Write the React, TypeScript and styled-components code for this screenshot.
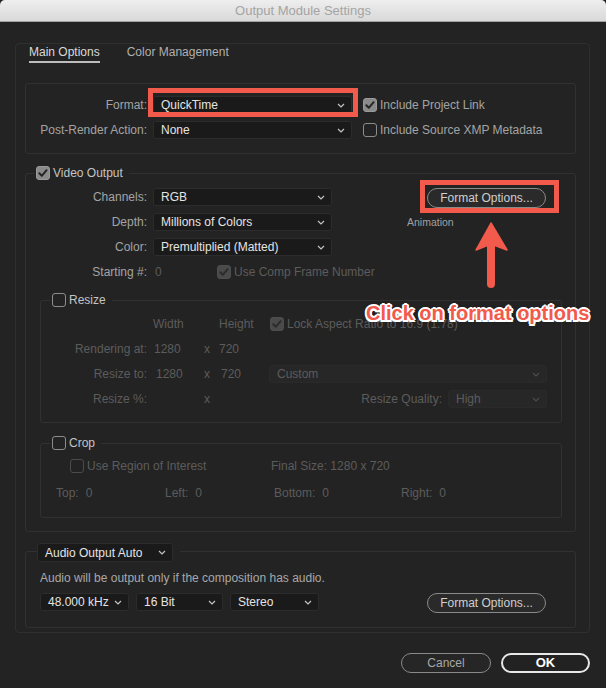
import React from "react";
import styled, { createGlobalStyle, css } from "styled-components";

const Global = createGlobalStyle`
  html, body { margin: 0; padding: 0; background: #232323; }
  body { font-family: "Liberation Sans", Arial, sans-serif; font-size: 12px; }
  * { box-sizing: border-box; }
`;

const BG = "#232323";
const LINE = "#313131";
const LABEL = "#a3a3a3";
const VALUE = "#e4e4e4";
const DIM = "#5c5c5c";
const RED = "#f25a4c";

const Window = styled.div`
  position: relative;
  width: 606px;
  height: 688px;
  overflow: hidden;
  background: ${BG};
  color: ${LABEL};
  font: 12px/16px "Liberation Sans", Arial, sans-serif;
`;

const TitleBar = styled.div`
  height: 22px;
  border-bottom: 1px solid #a2a2a2;
  border-radius: 5px 5px 0 0;
  background: linear-gradient(#eeeeee, #d9d9d9);
  text-align: center;
  font-size: 13px;
  line-height: 21px;
  color: #a4a4a4;
`;

const Panel = styled.div`
  margin: 21px 16px 0 15px;
  border: 1px solid #2f2f2f;
  border-radius: 4px;
  padding: 0 13px 4px 9px;
`;

const Tabs = styled.div`
  display: flex;
  gap: 27px;
  padding-left: 4px;
`;

const Tab = styled.div<{ $active?: boolean }>`
  line-height: 16px;
  padding-bottom: 1px;
  border-bottom: 2px solid ${(p) => (p.$active ? "#bdbdbd" : "transparent")};
  color: ${(p) => (p.$active ? "#dadada" : "#b0b0b0")};
`;

const Box = styled.div<{ $mt: number; $pt?: number; $pb: number; $mx?: string }>`
  border: 1px solid ${LINE};
  border-radius: 3px;
  margin-top: ${(p) => p.$mt}px;
  ${(p) => p.$mx && css`margin-left: ${p.$mx.split(" ")[0]}; margin-right: ${p.$mx.split(" ")[1]};`}
  padding-top: ${(p) => p.$pt ?? 0}px;
  padding-bottom: ${(p) => p.$pb}px;
`;

const Legend = styled.div<{ $ml: number; $up: number; $pl?: number; $pr?: number; $h: number }>`
  display: flex;
  align-items: center;
  gap: 3px;
  width: fit-content;
  height: ${(p) => p.$h}px;
  margin: -${(p) => p.$up}px 0 0 ${(p) => p.$ml}px;
  padding: 0 ${(p) => p.$pr ?? 6}px 0 ${(p) => p.$pl ?? 2}px;
  background: ${BG};
  color: #c4c4c4;
  white-space: nowrap;
`;

const Grid = styled.div<{ $cols: string; $gap?: number; $mt?: number }>`
  display: grid;
  grid-template-columns: ${(p) => p.$cols};
  column-gap: ${(p) => p.$gap ?? 0}px;
  row-gap: 7px;
  grid-auto-rows: 18px;
  align-items: center;
  margin-top: ${(p) => p.$mt ?? 0}px;
`;

const Label = styled.div<{ $dim?: boolean; $pr?: number }>`
  text-align: right;
  white-space: nowrap;
  padding-right: ${(p) => p.$pr ?? 0}px;
  color: ${(p) => (p.$dim ? DIM : LABEL)};
`;

const Text = styled.div<{ $dim?: boolean; $pl?: number; $w?: number; $color?: string }>`
  white-space: nowrap;
  padding-left: ${(p) => p.$pl ?? 0}px;
  ${(p) => p.$w && css`width: ${p.$w}px; flex: none;`}
  color: ${(p) => p.$color ?? (p.$dim ? DIM : LABEL)};
`;

const CheckRow = styled.div<{ $dim?: boolean; $pl?: number; $color?: string }>`
  display: flex;
  align-items: center;
  gap: 3px;
  white-space: nowrap;
  padding-left: ${(p) => p.$pl ?? 0}px;
  color: ${(p) => p.$color ?? (p.$dim ? DIM : LABEL)};
`;

const Box14 = styled.span<{ $checked?: boolean; $disabled?: boolean }>`
  display: inline-flex;
  align-items: center;
  justify-content: center;
  flex: none;
  width: 14px;
  height: 14px;
  border-radius: 3px;
  ${(p) =>
    p.$checked
      ? css`
          background: ${p.$disabled ? "#4a4a4a" : "#8a8a8a"};
          border: 1px solid ${p.$disabled ? "#4d4d4d" : "#9a9a9a"};
        `
      : css`
          border: 1.5px solid ${p.$disabled ? "#4b4b4b" : "#8c8c8c"};
        `}
`;

const Check = ({ checked, disabled }: { checked?: boolean; disabled?: boolean }) => (
  <Box14 $checked={checked} $disabled={disabled}>
    {checked && (
      <svg width="12" height="12" viewBox="0 0 12 12">
        <path
          d="M2.3 6.3 L4.8 8.8 L9.6 3.2"
          fill="none"
          stroke={disabled ? "#2c2c2c" : "#262626"}
          strokeWidth="2"
          strokeLinecap="round"
          strokeLinejoin="round"
        />
      </svg>
    )}
  </Box14>
);

const SelectBox = styled.div<{ $w: number; $h?: number; $disabled?: boolean }>`
  position: relative;
  display: flex;
  align-items: center;
  justify-content: space-between;
  flex: none;
  width: ${(p) => p.$w}px;
  height: ${(p) => p.$h ?? 18}px;
  padding: 0 6px 0 7px;
  border-radius: 3px;
  white-space: nowrap;
  background: ${(p) => (p.$disabled ? "#272727" : "#1a1a1a")};
  border: 1px solid ${(p) => (p.$disabled ? "#2a2a2a" : "#2c2c2c")};
  color: ${(p) => (p.$disabled ? DIM : VALUE)};
`;

const Frame = styled.div<{ $t: number; $r: number; $b: number; $l: number }>`
  position: relative;
  width: fit-content;
  &::after {
    content: "";
    position: absolute;
    top: ${(p) => p.$t}px;
    right: ${(p) => p.$r}px;
    bottom: ${(p) => p.$b}px;
    left: ${(p) => p.$l}px;
    border: 5px solid ${RED};
    pointer-events: none;
  }
`;

const Chevron = ({ disabled }: { disabled?: boolean }) => (
  <svg width="8" height="5" viewBox="0 0 8 5">
    <path
      d="M1 1 L4 4 L7 1"
      fill="none"
      stroke={disabled ? "#4c4c4c" : "#c4c4c4"}
      strokeWidth="1.2"
    />
  </svg>
);

const Select = ({
  value,
  w,
  h,
  disabled,
}: {
  value: string;
  w: number;
  h?: number;
  disabled?: boolean;
}) => (
  <SelectBox $w={w} $h={h} $disabled={disabled}>
    <span>{value}</span>
    <Chevron disabled={disabled} />
  </SelectBox>
);

const Pill = styled.button<{ $w: number; $primary?: boolean }>`
  flex: none;
  width: ${(p) => p.$w}px;
  height: 20px;
  padding: 0;
  border-radius: 10px;
  font: 12px/16px "Liberation Sans", Arial, sans-serif;
  background: ${(p) => (p.$primary ? "#222222" : "#2a2a2a")};
  border: ${(p) => (p.$primary ? "2px solid #e8e8e8" : "1.5px solid #8a8a8a")};
  color: ${(p) => (p.$primary ? "#ffffff" : "#cfcfcf")};
  font-weight: ${(p) => (p.$primary ? 700 : 400)};
  font-size: ${(p) => (p.$primary ? 13 : 12)}px;
`;

const CancelPill = styled(Pill)`
  color: #a8a8a8;
  background: #262626;
`;

const FormatRows = styled(Grid)`
  & > :nth-child(3n) {
    padding-left: 5px;
  }
`;

const VideoTop = styled.div`
  display: flex;
  align-items: flex-start;
  margin-top: 8px;
`;

const FormatCol = styled.div`
  display: flex;
  flex-direction: column;
  margin-left: 75px;
`;

const ButtonSpot = styled(Frame)`
  margin-left: 20px;
`;

const Caption = styled.div`
  margin-top: 8px;
  font-size: 10.5px;
  line-height: 12px;
  color: #a0a0a0;
`;

const ValueWithCheck = styled.div`
  display: flex;
  align-items: center;
`;

const RightCell = styled.div<{ $pl?: number; $pr?: number; $end?: boolean }>`
  display: flex;
  align-items: center;
  gap: 6px;
  justify-content: ${(p) => (p.$end ? "flex-end" : "flex-start")};
  padding-left: ${(p) => p.$pl ?? 0}px;
  padding-right: ${(p) => p.$pr ?? 0}px;
  white-space: nowrap;
`;

const Row = styled.div<{ $mt: number; $pl?: number; $gap?: number }>`
  display: flex;
  align-items: center;
  height: 18px;
  margin-top: ${(p) => p.$mt}px;
  padding-left: ${(p) => p.$pl ?? 0}px;
  gap: ${(p) => p.$gap ?? 0}px;
`;

const RoiCheck = styled(CheckRow)`
  width: 201px;
  flex: none;
`;

const CropItem = styled.div<{ $w?: number }>`
  display: flex;
  gap: 7px;
  color: ${DIM};
  white-space: nowrap;
  ${(p) => p.$w && css`width: ${p.$w}px; flex: none;`}
`;

const AudioNote = styled.div`
  margin-top: 8px;
  padding-left: 14px;
  line-height: 16px;
  color: #a8a8a8;
`;

const AudioRow = styled.div`
  display: flex;
  align-items: flex-start;
  gap: 7px;
  height: 20px;
  margin-top: 7px;
  padding-left: 14px;
`;

const AudioButton = styled(Pill)`
  margin-left: 101px;
`;

const Footer = styled.div`
  display: flex;
  justify-content: flex-end;
  gap: 10px;
  margin-top: 20px;
  padding-right: 16px;
`;

const ArrowSvg = styled.svg`
  position: absolute;
  left: 470px;
  top: 218px;
`;

const Callout = styled.div`
  position: absolute;
  left: 366px;
  top: 302px;
  font: 700 20px/22px "Liberation Sans", Arial, sans-serif;
  color: ${RED};
  white-space: nowrap;
  text-shadow: 2px 0 #fff, -2px 0 #fff, 0 2px #fff, 0 -2px #fff, 1.5px 1.5px #fff,
    -1.5px -1.5px #fff, 1.5px -1.5px #fff, -1.5px 1.5px #fff, 0 0 4px rgba(0, 0, 0, 0.6);
`;

export default function App() {
  return (
    <>
      <Global />
      <Window>
        <TitleBar>Output Module Settings</TitleBar>
        <Panel>
          <Tabs>
            <Tab $active>Main Options</Tab>
            <Tab>Color Management</Tab>
          </Tabs>

          <Box $mt={20} $pt={12} $pb={14}>
            <FormatRows $cols="121px 199px auto" $gap={6}>
              <Label>Format:</Label>
              <Frame $t={-8} $r={-6} $b={-3} $l={-5}>
                <Select value="QuickTime" w={199} />
              </Frame>
              <CheckRow>
                <Check checked />
                Include Project Link
              </CheckRow>
              <Label>Post-Render Action:</Label>
              <Select value="None" w={199} />
              <CheckRow>
                <Check />
                Include Source XMP Metadata
              </CheckRow>
            </FormatRows>
          </Box>

          <Box $mt={19} $pb={13}>
            <Legend $ml={8} $up={8} $h={14}>
              <Check checked />
              Video Output
            </Legend>
            <VideoTop>
              <Grid $cols="121px 179px" $gap={6}>
                <Label>Channels:</Label>
                <Select value="RGB" w={179} />
                <Label>Depth:</Label>
                <Select value="Millions of Colors" w={179} />
                <Label>Color:</Label>
                <Select value="Premultiplied (Matted)" w={179} />
                <Label>Starting #:</Label>
                <ValueWithCheck>
                  <Text $dim $pl={2} $w={64}>0</Text>
                  <CheckRow $dim>
                    <Check checked disabled />
                    Use Comp Frame Number
                  </CheckRow>
                </ValueWithCheck>
              </Grid>
              <FormatCol>
                <ButtonSpot $t={-8} $r={-13} $b={-5} $l={-7}>
                  <Pill $w={119}>Format Options...</Pill>
                </ButtonSpot>
                <Caption>Animation</Caption>
              </FormatCol>
            </VideoTop>

            <Box $mt={19} $pb={14} $mx="14px 13px">
              <Legend $ml={9} $up={8} $h={14}>
                <Check />
                Resize
              </Legend>
              <Grid $cols="112px 51px 15px 50px 1fr" $mt={8}>
                <span />
                <Text $dim>Width</Text>
                <span />
                <Text $dim>Height</Text>
                <CheckRow $dim $pl={1}>
                  <Check checked disabled />
                  Lock Aspect Ratio to 16:9 (1.78)
                </CheckRow>

                <Label $dim $pr={6}>Rendering at:</Label>
                <Text $dim $pl={1}>1280</Text>
                <Text $dim>x</Text>
                <Text $dim>720</Text>
                <span />

                <Label $dim $pr={6}>Resize to:</Label>
                <Text $dim $pl={3}>1280</Text>
                <Text $dim>x</Text>
                <Text $dim $pl={2}>720</Text>
                <RightCell>
                  <Select value="Custom" w={278} disabled />
                </RightCell>

                <Label $dim $pr={6}>Resize %:</Label>
                <span />
                <Text $dim>x</Text>
                <span />
                <RightCell $end $pr={14}>
                  <Text $dim>Resize Quality:</Text>
                  <Select value="High" w={99} disabled />
                </RightCell>
              </Grid>
            </Box>

            <Box $mt={20} $pb={15} $mx="14px 13px">
              <Legend $ml={9} $up={8} $h={14}>
                <Check />
                Crop
              </Legend>
              <Row $mt={7} $pl={29}>
                <RoiCheck $dim>
                  <Check disabled />
                  Use Region of Interest
                </RoiCheck>
                <Text $dim>Final Size: 1280 x 720</Text>
              </Row>
              <Row $mt={9} $pl={15}>
                <CropItem $w={109}>
                  <span>Top:</span>
                  <span>0</span>
                </CropItem>
                <CropItem $w={109}>
                  <span>Left:</span>
                  <span>0</span>
                </CropItem>
                <CropItem $w={127}>
                  <span>Bottom:</span>
                  <span>0</span>
                </CropItem>
                <CropItem>
                  <span>Right:</span>
                  <span>0</span>
                </CropItem>
              </Row>
            </Box>
          </Box>

          <Box $mt={19} $pb={14}>
            <Legend $ml={11} $up={9} $h={19} $pl={0} $pr={7}>
              <Select value="Audio Output Auto" w={136} h={19} />
            </Legend>
            <AudioNote>Audio will be output only if the composition has audio.</AudioNote>
            <AudioRow>
              <Select value="48.000 kHz" w={89} />
              <Select value="16 Bit" w={87} />
              <Select value="Stereo" w={89} />
              <AudioButton $w={119}>Format Options...</AudioButton>
            </AudioRow>
          </Box>
        </Panel>

        <Footer>
          <CancelPill $w={90}>Cancel</CancelPill>
          <Pill $w={89} $primary>
            OK
          </Pill>
        </Footer>

        <ArrowSvg width="42" height="74" viewBox="0 0 42 74">
          <path d="M21 5 L37 32 L21 26 L6 32 Z" fill={RED} stroke={RED} strokeWidth="1.5" strokeLinejoin="round" />
          <line x1="21" y1="27" x2="21" y2="66" stroke={RED} strokeWidth="8" strokeLinecap="round" />
        </ArrowSvg>
        <Callout>Click on format options</Callout>
      </Window>
    </>
  );
}
